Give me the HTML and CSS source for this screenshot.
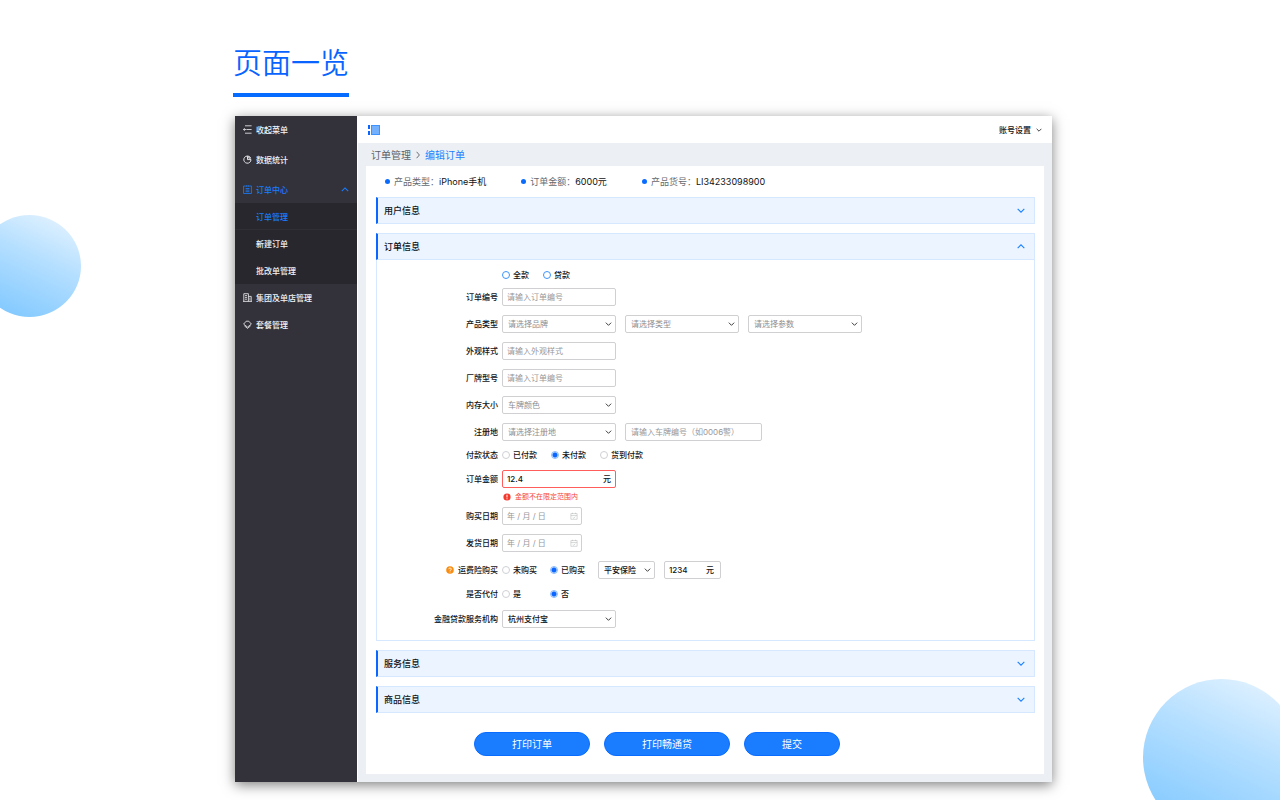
FILE: index.html
```html
<!DOCTYPE html>
<html lang="zh-CN">
<head>
<meta charset="utf-8">
<meta name="viewport" content="width=device-width, initial-scale=1">
<title>页面一览</title>
<link rel="stylesheet" href="styles.css">
</head>
<body>
<svg width="0" height="0" class="sprite" aria-hidden="true">
  <symbol id="down" viewBox="0 0 10 6"><path d="M1 1l4 4 4-4" fill="none" stroke="currentColor" stroke-width="1.3"/></symbol>
  <symbol id="up" viewBox="0 0 10 6"><path d="M1 5l4-4 4 4" fill="none" stroke="currentColor" stroke-width="1.3"/></symbol>
  <symbol id="calendar" viewBox="0 0 9 9"><path d="M1 1.8h7v6.4H1zM1 4h7M2.8 .8v1.4M6.2 .8v1.4M3 6l1.2 1L6 5.3" fill="none" stroke="currentColor" stroke-width=".6"/></symbol>
</svg>
<div class="page">
  <div class="bubble bubble-left"></div>
  <div class="bubble bubble-right"></div>
  <h1 class="page-title">页面一览</h1>
  <div class="window">
    <nav class="sidebar">
      <button class="nav-item" type="button">
        <svg class="nav-icon" viewBox="0 0 9 9"><path d="M2 .8h6.6M3.5 4.5h5.1M2 8.2h6.6M3.2 4.5H.5M1.7 3.2L.4 4.5l1.3 1.3" fill="none" stroke="currentColor" stroke-width=".8"/></svg>收起菜单</button>
      <a class="nav-item nav-tall" href="#stats">
        <svg class="nav-icon" viewBox="0 0 9 9"><path d="M5.8 1.3A3.6 3.6 0 1 0 8 4.6H4.5V1.2M5.8 1.3A3.6 3.6 0 0 1 7.7 3.2H5.8z" fill="none" stroke="currentColor" stroke-width=".9"/></svg>数据统计</a>
      <a class="nav-item is-active" href="#orders">
        <svg class="nav-icon" viewBox="0 0 9 9"><path d="M2 1H.6v7.5h7.8V1H7M2.6 3.5h3.8M2.6 5.1h3.8M2.6 6.7h3.8M3 1h3M3 .2v1.8M6 .2v1.8" fill="none" stroke="currentColor" stroke-width=".8"/></svg>订单中心
        <svg class="nav-arrow"><use href="#up"/></svg></a>
      <div class="submenu">
        <a class="sub-item is-active" href="#manage">订单管理</a>
        <a class="sub-item" href="#new">新建订单</a>
        <a class="sub-item" href="#batch">批改单管理</a>
      </div>
      <a class="nav-item" href="#stores">
        <svg class="nav-icon" viewBox="0 0 9 9"><path d="M.8 8.3V.7h4.6v7.6M5.4 3.4h2.8v4.9M0 8.4h9M2 2.6h2M2 4.4h2M2 6.2h2M6.3 5.2h1M6.3 6.8h1" fill="none" stroke="currentColor" stroke-width=".8"/></svg>集团及单店管理</a>
      <a class="nav-item" href="#packages">
        <svg class="nav-icon" viewBox="0 0 9 9"><path d="M3.2 1.2h2.6l2.6 2.9-3.9 3L.6 4.1zM1.4 5.8l3.1 2.6 3.1-2.6" fill="none" stroke="currentColor" stroke-width=".8"/></svg>套餐管理</a>
    </nav>
    <main class="main">
      <header class="topbar">
        <svg class="logo" viewBox="0 0 12 10"><path d="M0 0h2v4H0zM0 6h2v4H0z" fill="#0a66ff"/><path d="M3 0h9v10H3z" fill="#3d94ff"/><path d="M4 1h7v8H4z" fill="#73b1ff"/></svg>
        <button class="account" type="button">账号设置<svg class="account-arrow"><use href="#down"/></svg></button>
      </header>
      <div class="crumbs">
        <a class="crumb" href="#manage">订单管理</a>
        <svg class="crumb-sep" viewBox="0 0 4 8"><path d="M.6 .8L3.4 4 .6 7.2" fill="none" stroke="currentColor" stroke-width=".9"/></svg>
        <a class="crumb crumb-current" href="#edit">编辑订单</a>
      </div>
      <form class="panel">
        <dl class="summary">
          <div class="fact"><dt>产品类型：</dt><dd>iPhone手机</dd></div>
          <div class="fact"><dt>订单金额：</dt><dd>6000元</dd></div>
          <div class="fact"><dt>产品货号：</dt><dd>LI34233098900</dd></div>
        </dl>
        <section class="section"><button class="section-head" type="button">用户信息<svg class="section-arrow"><use href="#down"/></svg></button></section>
        <section class="section">
          <button class="section-head" type="button">订单信息<svg class="section-arrow"><use href="#up"/></svg></button>
          <div class="section-body">
            <div class="row row-first"><span class="label"></span>
              <div class="options options-blue">
                <label class="option"><input type="radio" name="loan">全款</label>
                <label class="option"><input type="radio" name="loan">贷款</label>
              </div></div>
            <div class="row"><label class="label" for="no">订单编号</label><input class="control" id="no" placeholder="请输入订单编号"></div>
            <div class="row"><label class="label" for="brand">产品类型</label>
              <span class="pick"><select class="control is-empty" id="brand"><option>请选择品牌</option></select><svg><use href="#down"/></svg></span>
              <span class="pick"><select class="control is-empty" aria-label="类型"><option>请选择类型</option></select><svg><use href="#down"/></svg></span>
              <span class="pick"><select class="control is-empty" aria-label="参数"><option>请选择参数</option></select><svg><use href="#down"/></svg></span></div>
            <div class="row"><label class="label" for="look">外观样式</label><input class="control" id="look" placeholder="请输入外观样式"></div>
            <div class="row"><label class="label" for="model">厂牌型号</label><input class="control" id="model" placeholder="请输入订单编号"></div>
            <div class="row"><label class="label" for="memory">内存大小</label>
              <span class="pick"><select class="control is-empty" id="memory"><option>车牌颜色</option></select><svg><use href="#down"/></svg></span></div>
            <div class="row"><label class="label" for="place">注册地</label>
              <span class="pick"><select class="control is-empty" id="place"><option>请选择注册地</option></select><svg><use href="#down"/></svg></span>
              <input class="control control-wide" aria-label="车牌编号" placeholder="请输入车牌编号（如0006警）"></div>
            <div class="row row-short"><span class="label">付款状态</span>
              <div class="options">
                <label class="option"><input type="radio" name="pay">已付款</label>
                <label class="option"><input type="radio" name="pay" checked>未付款</label>
                <label class="option"><input type="radio" name="pay">货到付款</label>
              </div></div>
            <div class="row"><label class="label" for="amount">订单金额</label>
              <span class="money"><input class="control is-error" id="amount" value="12.4"><span class="unit">元</span></span></div>
            <p class="error"><svg viewBox="0 0 8 8"><circle cx="4" cy="4" r="3.6" fill="#f5382c"/><path d="M4 1.7v2.8M4 5.3v1" stroke="#fff" stroke-width="1"/></svg>金额不在限定范围内</p>
            <div class="row"><label class="label" for="bought">购买日期</label>
              <span class="date"><input class="control" id="bought" placeholder="年 / 月 / 日"><svg><use href="#calendar"/></svg></span></div>
            <div class="row"><label class="label" for="shipped">发货日期</label>
              <span class="date"><input class="control" id="shipped" placeholder="年 / 月 / 日"><svg><use href="#calendar"/></svg></span></div>
            <div class="row"><span class="label"><svg class="help" viewBox="0 0 8 8"><circle cx="4" cy="4" r="3.8" fill="#fa8c0f"/><path d="M2.8 3.2a1.2 1.2 0 1 1 1.8 1q-.6.3-.6.8M4 5.6v.8" fill="none" stroke="#fff" stroke-width=".9"/></svg>运费险购买</span>
              <div class="options options-even">
                <label class="option"><input type="radio" name="insured">未购买</label>
                <label class="option"><input type="radio" name="insured" checked>已购买</label>
              </div>
              <span class="pick pick-small"><select class="control" aria-label="保险"><option>平安保险</option></select><svg><use href="#down"/></svg></span>
              <span class="money money-small"><input class="control" aria-label="保险金额" value="1234"><span class="unit">元</span></span></div>
            <div class="row row-medium"><span class="label">是否代付</span>
              <div class="options options-even">
                <label class="option"><input type="radio" name="proxy">是</label>
                <label class="option"><input type="radio" name="proxy" checked>否</label>
              </div></div>
            <div class="row"><label class="label" for="org">金融贷款服务机构</label>
              <span class="pick"><select class="control" id="org"><option>杭州支付宝</option></select><svg><use href="#down"/></svg></span></div>
          </div>
        </section>
        <section class="section"><button class="section-head" type="button">服务信息<svg class="section-arrow"><use href="#down"/></svg></button></section>
        <section class="section"><button class="section-head" type="button">商品信息<svg class="section-arrow"><use href="#down"/></svg></button></section>
        <div class="actions">
          <button class="action" type="button">打印订单</button>
          <button class="action" type="button">打印畅通贷</button>
          <button class="action" type="submit">提交</button>
        </div>
      </form>
    </main>
  </div>
</div>
</body>
</html>
```
FILE: styles.css
```css
* { box-sizing: border-box; }

body {
  margin: 0;
  background: #fff;
  color: #101216;
  font: 8px/12px Inter, "Noto Sans CJK SC", sans-serif;
}

button, input, select { margin: 0; font: inherit; color: inherit; }
button { border: 0; background: none; text-align: left; cursor: pointer; }
a { color: inherit; text-decoration: none; }
.sprite { position: absolute; }

.page {
  position: relative;
  min-height: 100vh;
  padding: 39px 228px 18px 235px;
  overflow: hidden;
}

.bubble { position: absolute; border-radius: 50%; }
.bubble-left {
  left: -22px;
  top: 215px;
  width: 103px;
  height: 102px;
  background: linear-gradient(205deg, #e4f3ff 5%, #b5dfff 42%, #82c9ff 90%);
}
.bubble-right {
  right: -20px;
  bottom: -36px;
  width: 157px;
  height: 157px;
  background: linear-gradient(205deg, #e4f3ff 5%, #b5dfff 42%, #82c9ff 90%);
}

.page-title {
  width: max-content;
  margin: 0 0 19px -2px;
  padding-bottom: 4px;
  border-bottom: 4px solid #066bff;
  color: #0863ff;
  font-size: 29px;
  font-weight: 350;
  line-height: 50px;
}

.window {
  position: relative;
  display: flex;
  background: #ecf0f5;
  box-shadow: 0 3px 12px rgba(0, 0, 0, .5);
}

.sidebar { flex: 0 0 122px; background: #33323b; color: #f4f4f6; font-weight: 500; }
.nav-item {
  display: flex;
  align-items: center;
  gap: 4px;
  width: 100%;
  height: 27px;
  padding: 0 8px;
}
.nav-tall { height: 33px; }
.nav-icon { width: 9px; height: 9px; }
.nav-arrow { width: 8px; height: 5px; margin-left: auto; }
.is-active { color: #1a7dff; }
.submenu { background: #28272d; }
.sub-item { display: block; padding: 1px 0 0 21px; line-height: 26px; }
.sub-item:first-child { box-shadow: inset 0 -1px #302f36; }

.main { flex: 1; min-width: 0; border-left: 1px solid #fff; }
.topbar {
  display: flex;
  align-items: center;
  justify-content: space-between;
  height: 27px;
  padding: 0 10px;
  background: #fff;
}
.logo { width: 12px; height: 10px; }
.account { display: flex; align-items: center; gap: 5px; padding: 0; font-weight: 500; }
.account-arrow { width: 6px; height: 4px; }

.crumbs {
  display: flex;
  align-items: center;
  gap: 5px;
  height: 23px;
  padding-left: 13px;
  color: #5c5f66;
  font-size: 10px;
}
.crumb-sep { width: 4px; height: 8px; }
.crumb-current { color: #1a80ff; }

.panel { margin: 0 8px 8px; padding: 0 9px 18px 10px; background: #fff; }

.summary {
  display: flex;
  gap: 35px;
  height: 31px;
  margin: 0;
  padding-left: 9px;
  align-items: center;
  font-size: 9px;
}
.fact { display: flex; align-items: center; }
.fact::before {
  content: "";
  width: 5px;
  height: 5px;
  margin-right: 4px;
  border-radius: 50%;
  background: #0a6cff;
}
.fact dt { color: #666a70; }
.fact dd { margin: 0; }

.section { margin-bottom: 9px; }
.section-head {
  display: flex;
  align-items: center;
  justify-content: space-between;
  width: 100%;
  height: 27px;
  padding: 0 8px 0 6px;
  border: 1px solid #d6e8ff;
  border-left: 2px solid #0a66ff;
  background: #ebf4ff;
  font-size: 9px;
  font-weight: 500;
}
.section-arrow { width: 10px; height: 5px; color: #1a80ff; }
.section-body { padding: 6px 0 8px; border: 1px solid #d6e8ff; border-top: 0; }

.row { display: flex; align-items: center; gap: 9px; height: 27px; }
.row-first { height: 17px; }
.row-short { height: 20px; }
.row-medium { height: 22px; }
.label {
  display: flex;
  align-items: center;
  justify-content: flex-end;
  width: 121px;
  margin-right: -5px;
  font-weight: 500;
}
.help { width: 8px; height: 8px; margin-right: 4px; }

.control {
  width: 114px;
  height: 18px;
  padding: 0 4px;
  border: 1px solid #d0d0d2;
  border-radius: 2px;
  background: #fff;
  font-weight: 500;
  outline: 0;
}
.control::placeholder { color: #97989b; opacity: 1; font-weight: 400; }
.control-wide { width: 137px; padding-left: 5px; }
.is-empty { color: #8d8e91; font-weight: 400; }
.is-error { border-color: #ff5c5c; }

.pick, .date, .money { position: relative; display: flex; width: 114px; }
.pick .control, .date .control, .money .control { width: 100%; }
.pick select { appearance: none; padding-left: 5px; }
.pick svg {
  position: absolute;
  right: 4px;
  top: 7px;
  width: 7px;
  height: 4px;
  color: #222;
  pointer-events: none;
}
.date { width: 80px; }
.date svg { position: absolute; right: 4px; top: 5px; width: 8px; height: 8px; color: #b4b5b8; }
.unit { position: absolute; right: 5px; top: 3px; font-weight: 500; }
.pick-small, .money-small { width: 57px; }
.money-small .unit { right: 7px; }

.options { display: flex; gap: 14px; font-weight: 500; }
.option { display: flex; align-items: center; gap: 3px; }
.options-even { gap: 12px; margin-right: 3px; }
.options-even .option { width: 36px; }
.option input {
  appearance: none;
  width: 8px;
  height: 8px;
  border: 1px solid #cfd0d3;
  border-radius: 50%;
  background: #fff;
}
.options-blue input { border-color: #3d94ff; }
.option input:checked {
  border-color: #8abcff;
  background: radial-gradient(circle, #0a66ff 2px, #cfe3ff 3px);
}

.error {
  display: flex;
  align-items: center;
  gap: 4px;
  height: 10px;
  margin: 0;
  padding-left: 126px;
  color: #f5483c;
  font-size: 7px;
}
.error svg { width: 8px; height: 8px; }

.actions {
  display: flex;
  justify-content: center;
  gap: 14px;
  margin-top: 19px;
  padding-right: 97px;
}
.action {
  height: 24px;
  padding: 0 37px;
  border: 1px solid #0a6cff;
  border-radius: 12px;
  background: #1a7dff;
  color: #fff;
  font-size: 10px;
}
```
